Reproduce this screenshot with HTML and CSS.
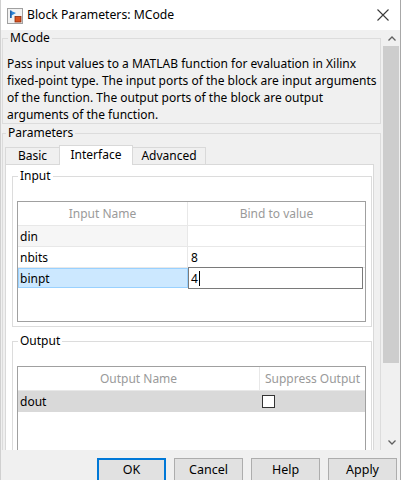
FILE: index.html
```html
<!DOCTYPE html>
<html>
<head>
<meta charset="utf-8">
<title>Block Parameters: MCode</title>
<link rel="stylesheet" href="styles.css">
</head>
<body>
<div class="window">
  <div class="titlebar">
    <svg class="app-icon" width="16" height="16" viewBox="0 0 16 16">
      <rect x="0.5" y="0.5" width="15" height="15" fill="#f2f2f2" stroke="#a0a0a0"/>
      <path d="M3 2.5 L3 10 L4.5 10 L4.5 7.5 L9 5 Z" fill="#2f86d6"/>
      <rect x="3" y="2.5" width="1.5" height="7.5" fill="#1f5fa8"/>
      <rect x="8" y="8.5" width="6" height="5.5" fill="#d8531f" stroke="#8a2a0a" stroke-width="0.8"/>
    </svg>
    <span class="title">Block Parameters: MCode</span>
    <svg class="close-icon" width="12" height="12" viewBox="0 0 12 12">
      <path d="M0.5 0.5 L11.5 11.5 M11.5 0.5 L0.5 11.5" stroke="#3a3a3a" stroke-width="1.1" fill="none"/>
    </svg>
  </div>

  <div class="main">
    <div class="content">
      <fieldset class="group desc-group">
        <legend>MCode</legend>
        <p class="desc">Pass input values to a MATLAB function for evaluation in Xilinx<br>fixed-point type. The input ports of the block are input arguments<br>of the function. The output ports of the block are output<br>arguments of the function.</p>
      </fieldset>

      <fieldset class="group params-group">
        <legend>Parameters</legend>
        <div class="tabs">
          <div class="tab tab-basic">Basic</div>
          <div class="tab tab-active">Interface</div>
          <div class="tab">Advanced</div>
        </div>
        <div class="tab-panel">
          <fieldset class="group inner-group">
            <legend>Input</legend>
            <div class="grid-box grid-input">
              <div class="grid-row grid-head">
                <div class="cell c-in-1 head-cell">Input Name</div>
                <div class="cell c-in-2 head-cell">Bind to value</div>
              </div>
              <div class="grid-row">
                <div class="cell c-in-1 cell-readonly">din</div>
                <div class="cell c-in-2"></div>
              </div>
              <div class="grid-row">
                <div class="cell c-in-1">nbits</div>
                <div class="cell c-in-2 val">8</div>
              </div>
              <div class="grid-row row-selected">
                <div class="cell c-in-1 cell-selected">binpt</div>
                <div class="cell c-in-2 cell-edit"><span class="edit-text">4</span><span class="caret"></span></div>
              </div>
            </div>
          </fieldset>

          <fieldset class="group inner-group output-group">
            <legend>Output</legend>
            <div class="grid-box grid-output">
              <div class="grid-row grid-head">
                <div class="cell c-out-1 head-cell">Output Name</div>
                <div class="cell c-out-2 head-cell">Suppress Output</div>
              </div>
              <div class="grid-row row-grey">
                <div class="cell c-out-1">dout</div>
                <div class="cell c-out-2 check-cell"><span class="checkbox"></span></div>
              </div>
            </div>
          </fieldset>
        </div>
      </fieldset>
    </div>

    <div class="scrollbar">
      <div class="sb-btn">
        <svg width="8" height="5" viewBox="0 0 8 5"><path d="M0.5 4.5 L4 1 L7.5 4.5" stroke="#606060" stroke-width="1.3" fill="none"/></svg>
      </div>
      <div class="sb-track">
        <div class="sb-thumb"></div>
      </div>
      <div class="sb-btn">
        <svg width="8" height="5" viewBox="0 0 8 5"><path d="M0.5 0.5 L4 4 L7.5 0.5" stroke="#606060" stroke-width="1.3" fill="none"/></svg>
      </div>
    </div>
  </div>

  <div class="button-bar">
    <button class="btn btn-default">OK</button>
    <button class="btn">Cancel</button>
    <button class="btn">Help</button>
    <button class="btn">Apply</button>
  </div>
</div>
</body>
</html>
```

FILE: styles.css
```css
* { box-sizing: border-box; }

html, body {
  margin: 0;
  padding: 0;
  background: #f0f0f0;
}

body {
  font-family: "Noto Sans", "Open Sans", sans-serif;
  font-size: 12px;
  color: #000;
  width: 401px;
  height: 480px;
  overflow: hidden;
}

.window {
  width: 401px;
  height: 480px;
  display: flex;
  flex-direction: column;
  background: #f0f0f0;
  border-right: 1px solid #a8a8a8;
  border-left: 1px solid #d0d0d0;
}

/* Title bar */
.titlebar {
  height: 30px;
  flex: 0 0 30px;
  background: #fff;
  display: flex;
  align-items: center;
  padding-left: 6px;
  padding-right: 11px;
}

.app-icon {
  flex: 0 0 16px;
  margin-top: 1px;
}

.title {
  margin-left: 4px;
  font-size: 12.2px;
  line-height: 16px;
  flex: 1;
}

.close-icon {
  flex: 0 0 12px;
}

/* Main */
.main {
  flex: 0 0 420px;
  height: 420px;
  display: flex;
}

.content {
  width: 382px;
  height: 420px;
  overflow: hidden;
  padding-left: 1px;
}

/* Group boxes */
.group {
  margin: 0;
  min-width: 0;
  border: 1px solid #dcdcdc;
}

.group > legend {
  padding: 0 2px;
  margin-left: 1px;
  line-height: 16px;
  font-size: 12px;
}

.desc-group {
  width: 379px;
  padding: 9px 4px 0 4px;
}

.desc {
  margin: 0;
  line-height: 17px;
  white-space: nowrap;
}

.params-group {
  width: 379px;
  margin-top: 1px;
  padding: 4px 0 0 2px;
  height: 400px;
  border-bottom: none;
}

/* Tabs */
.tabs {
  display: flex;
  align-items: flex-end;
  height: 19px;
}

.tab {
  height: 17px;
  width: 74px;
  border: 1px solid #d9d9d9;
  border-bottom: none;
  background: #f0f0f0;
  text-align: center;
  line-height: 16px;
  margin-right: -1px;
}

.tab-basic {
  width: 55px;
}

.tab-active {
  height: 20px;
  margin-bottom: -1px;
  background: #fff;
  position: relative;
  z-index: 1;
  line-height: 18px;
}

.tab-panel {
  width: 369px;
  height: 300px;
  background: #fff;
  border: 1px solid #d9d9d9;
  padding: 3px 0 0 6px;
}

.inner-group {
  width: 360px;
  padding: 17px 0 4px 4px;
}

.output-group {
  margin-top: 6px;
  padding-top: 17px;
  height: 200px;
}

/* Grids */
.grid-box {
  width: 349px;
  border: 1px solid #a0a0a0;
  background: #fff;
}

.grid-input {
  height: 121px;
}

.grid-output {
  height: 120px;
}

.grid-row {
  display: flex;
  height: 21px;
  border-bottom: 1px solid #e8e8e8;
}

.grid-head {
  height: 24px;
}

.cell {
  line-height: 20px;
  padding-top: 1px;
  padding-left: 2px;
  white-space: nowrap;
  overflow: hidden;
}

.head-cell {
  text-align: center;
  color: #9a9a9a;
  line-height: 23px;
  padding-left: 0;
  padding-top: 0;
}

.c-in-1 {
  width: 170px;
  border-right: 1px solid #e8e8e8;
}

.c-in-2 {
  flex: 1;
}

.c-out-1 {
  width: 242px;
  border-right: 1px solid #e8e8e8;
}

.c-out-2 {
  flex: 1;
}

.val {
  padding-left: 3px;
}

.cell-readonly {
  background: #f6f6f6;
}

.row-selected {
  border-bottom-color: #fff;
}

.cell-selected {
  background: #cce8ff;
  border: 1px solid #99d1ff;
  line-height: 18px;
  padding-top: 1px;
  padding-left: 1px;
}

.cell-edit {
  border: 1px solid #7a7a7a;
  margin-right: 2px;
  margin-top: -1px;
  height: 22px;
  padding-left: 2px;
  padding-top: 1px;
  display: flex;
  align-items: center;
}

.edit-text {
  line-height: 18px;
}

.caret {
  display: inline-block;
  width: 1px;
  height: 15px;
  background: #000;
  margin-left: 1px;
}

.row-grey {
  background: #d9d9d9;
  border-bottom-color: #d9d9d9;
}

.row-grey .c-out-1 {
  border-right-color: #d9d9d9;
}

.check-cell {
  display: flex;
  align-items: center;
  padding-left: 2px;
  padding-top: 0;
}

.checkbox {
  width: 13px;
  height: 13px;
  border: 1px solid #333;
  background: #fff;
}

/* Scrollbar */
.scrollbar {
  width: 17px;
  height: 420px;
  display: flex;
  flex-direction: column;
  background: #f0f0f0;
}

.sb-btn {
  height: 16px;
  flex: 0 0 16px;
  display: flex;
  align-items: center;
  justify-content: center;
}

.sb-track {
  flex: 1;
  padding-right: 1px;
}

.sb-thumb {
  height: 317px;
  background: #cdcdcd;
}

/* Buttons */
.button-bar {
  flex: 1;
  display: flex;
  justify-content: flex-end;
  gap: 8px;
  padding: 8px 3px 0 0;
}

.btn {
  width: 69px;
  height: 24px;
  background: #e1e1e1;
  border: 1px solid #adadad;
  font-family: inherit;
  font-size: 12.5px;
  color: #000;
  padding: 0;
  line-height: 22px;
}

.btn-default {
  border: 2px solid #0078d7;
  line-height: 20px;
}
```
